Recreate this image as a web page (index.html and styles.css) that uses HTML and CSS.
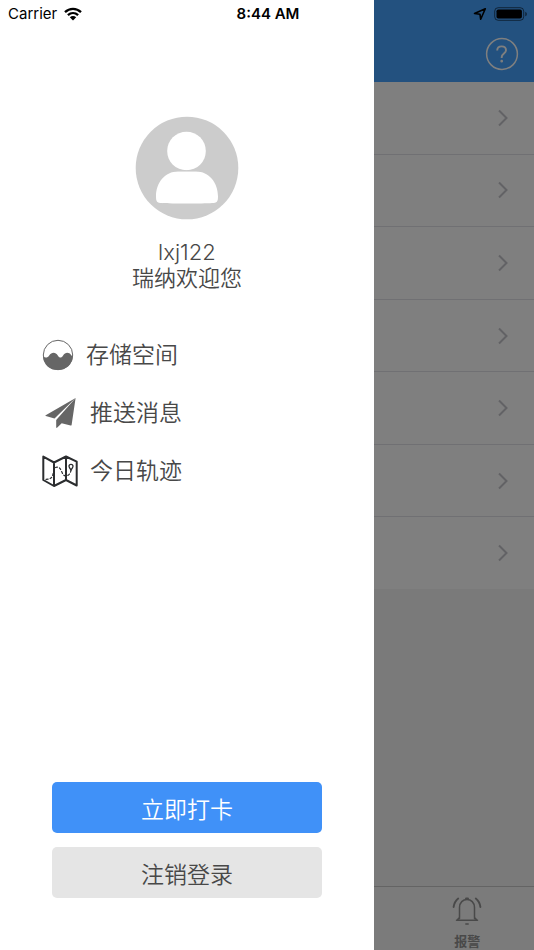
FILE: index.html
```html
<!DOCTYPE html>
<html lang="zh-CN">
<head>
<meta charset="utf-8">
<meta name="viewport" content="width=device-width, initial-scale=1">
<title>瑞纳</title>
<link rel="stylesheet" href="styles.css">
</head>
<body>
<div class="screen">
  <div class="app">
    <header class="navbar">
      <button class="help" aria-label="帮助">
        <svg viewBox="0 0 34 34" width="34" height="34" fill="none" stroke="#fff" stroke-width="1.5"><circle cx="17" cy="17" r="15.4"/><path d="M12.200 13.600c0-2.600 1.800-4.200 4.400-4.200s4.400 1.500 4.400 3.800c0 3.100-4.300 3.400-4.300 6.800v1" stroke-width="1.900"/><circle cx="16.700" cy="24.200" r=".6"/></svg>
      </button>
    </header>
    <ul class="rows">
      <li><svg class="chevron" viewBox="0 0 12 18"><path d="M2 1.5 9.5 9 2 16.5"/></svg></li>
      <li><svg class="chevron" viewBox="0 0 12 18"><path d="M2 1.5 9.5 9 2 16.5"/></svg></li>
      <li><svg class="chevron" viewBox="0 0 12 18"><path d="M2 1.5 9.5 9 2 16.5"/></svg></li>
      <li><svg class="chevron" viewBox="0 0 12 18"><path d="M2 1.5 9.5 9 2 16.5"/></svg></li>
      <li><svg class="chevron" viewBox="0 0 12 18"><path d="M2 1.5 9.5 9 2 16.5"/></svg></li>
      <li><svg class="chevron" viewBox="0 0 12 18"><path d="M2 1.5 9.5 9 2 16.5"/></svg></li>
      <li><svg class="chevron" viewBox="0 0 12 18"><path d="M2 1.5 9.5 9 2 16.5"/></svg></li>
    </ul>
    <nav class="tabbar">
      <a class="tab" href="#alarm">
        <svg viewBox="0 0 30 30" width="30" height="30" fill="none" stroke="#929292" stroke-width="1.5" stroke-linecap="round"><path d="M7.500 22.500V11.500C7.500 6.500 11 3.500 15 3.500s7.500 3 7.500 8v11M4.500 24.300h21M7.500 21.500l-2.600 2.800M22.500 21.500l2.600 2.800"/><path d="M14.200 2.600h1.600" stroke-width="2.400"/><path d="M13.800 28h2.400"/><path d="M6.200 2.600C3.600 4.600 2.200 7.500 1.600 11M23.800 2.600c2.600 2 4 4.900 4.600 8.400" stroke-width="1.900"/></svg>
        <span>报警</span>
      </a>
    </nav>
  </div>
  <div class="shade"></div>
  <aside class="drawer">
    <section class="profile">
      <svg viewBox="0 0 104 104" width="104" height="104"><circle cx="52" cy="52" r="51.300" fill="#ccc"/><circle cx="51.500" cy="35" r="19.300" fill="#fff"/><path d="M31 88" fill="#fff"/><path d="M43 55.500h18c13 0 22 11 22 25 0 5-1 6.500-6 6.500-9 .8-41 .8-50 0-5 0-6-1.500-6-6.500 0-14 9-25 22-25z" fill="#fff"/><path d="M40 54.700h23" stroke="#ccc" stroke-width=".8"/></svg>
      <p class="name">lxj122</p>
      <p>瑞纳欢迎您</p>
    </section>
    <nav class="menu">
      <a href="#storage">
        <svg viewBox="0 0 32 32" width="32" height="32"><circle cx="16" cy="16" r="14.700" fill="#fff" stroke="#666" stroke-width="1"/><path d="M1 17.400c2.400 1.600 4.600 1.400 6.200-1 2.200-3.400 6.300-3.800 8.600 0 1.700 2.700 3.600 2.700 5.300 0 2.200-3.400 5.900-3.400 8.100-.2.600.7 1.100 1 1.700 1C30.400 25.300 24.300 31 16 31S1.600 25.600 1 17.400z" fill="#666"/></svg>
        <span>存储空间</span>
      </a>
      <a href="#push">
        <svg viewBox="0 0 36 32" width="36" height="32" fill="#666"><path d="M33.600 1 3.700 18.200c-.4.300-.3.700.1.800L12.500 21.500z"/><path d="M33.600 1 14.200 23v7.200c0 .8.600.9 1.100.4l4.400-4.400 8.900 2.300c.5.100.9-.1 1-.6z"/></svg>
        <span>推送消息</span>
      </a>
      <a href="#track">
        <svg viewBox="0 0 36 32" width="36" height="32" fill="none" stroke="#2b2d2f" stroke-width="2" stroke-linejoin="round" stroke-linecap="round"><path d="M1.300 1.600 12 7.500l12-6 10.700 5.200v23.800L24 25l-12 6L1.300 25zM12 7.500V31M24 1.500V25"/><path d="M4 24.300c5 0 6.500-2 7.300-6.500.8-4.500 2.200-6.500 5-5.500 3.500 1 3.200 8 7 8.500 3.500.4 5.600-3 5.700-6" stroke-width="1.200" stroke-dasharray="2 2.200"/><path d="M29 15c-1.300-1.700-2-2.700-2-3.700a2 2 0 0 1 4 0c0 1-.7 2-2 3.700z" stroke-width="1.300"/></svg>
        <span>今日轨迹</span>
      </a>
    </nav>
    <div class="actions">
      <button class="primary">立即打卡</button>
      <button>注销登录</button>
    </div>
  </aside>
  <div class="status">
    <div class="carrier"><span>Carrier</span>
      <svg viewBox="0 0 18 14" width="18" height="14" fill="none" stroke="#000" stroke-width="2.300"><path d="M1 5.200c4.600-4.400 11.400-4.400 16 0M3.900 8.200c3-2.800 7.200-2.800 10.200 0"/><path d="M9 13.500 5.800 10.200c1.900-1.600 4.500-1.600 6.400 0z" fill="#000" stroke="none"/></svg>
    </div>
    <time>8:44 AM</time>
    <div class="power">
      <svg viewBox="0 0 14 14" width="14" height="14" fill="none" stroke="#000" stroke-width="1.600" stroke-linejoin="round"><path d="M12.300 1.700 1.500 6.500l5.500.8.700 5z"/></svg>
      <svg viewBox="0 0 34 14" width="34" height="14"><rect x=".7" y=".7" width="29" height="12.600" rx="3.500" fill="none" stroke="#000" stroke-opacity=".55"/><rect x="2.500" y="2.500" width="25.400" height="9" rx="1.800"/><path d="M31.300 4.700c2 .8 2 3.800 0 4.600z" fill-opacity=".6"/></svg>
    </div>
  </div>
</div>
</body>
</html>
```
FILE: styles.css
```css
* { box-sizing: border-box; }
body {
  margin: 0;
  font-family: Inter, "Noto Sans CJK SC", sans-serif;
  color: #484848;
}
svg { display: block; flex: none; }
a { color: inherit; text-decoration: none; }
p, ul { margin: 0; padding: 0; }
button { font: inherit; color: inherit; border: 0; padding: 0; }

.screen {
  display: grid;
  grid-template: minmax(100vh, auto) / 7fr 3fr;
}
.app, .shade, .status { grid-area: 1 / 1 / 2 / 3; }
.drawer { grid-area: 1 / 1; }

.app {
  display: flex;
  flex-direction: column;
  background: #f4f4f4;
}
.navbar {
  display: flex;
  justify-content: flex-end;
  padding: 37px 15px 11px;
  background: #46a2ff;
}
.help { background: none; }
.rows {
  display: flex;
  flex-direction: column;
  min-height: 507px;
  list-style: none;
  background: #fff;
}
.rows li {
  flex: 1;
  display: flex;
  align-items: center;
  justify-content: flex-end;
  padding-right: 25px;
  border-bottom: 1px solid #e0e0e6;
}
.rows li:last-child { border-bottom: 0; }
.chevron {
  width: 12px;
  height: 18px;
  fill: none;
  stroke: #c4c4ca;
  stroke-width: 2;
}
.tabbar {
  display: flex;
  justify-content: flex-end;
  margin-top: auto;
  border-top: 1px solid #c8c8c8;
  background: #f6f6f6;
}
.tab {
  width: 25%;
  height: 63px;
  padding-top: 9px;
  display: flex;
  flex-direction: column;
  align-items: center;
  gap: 6px;
  color: #929292;
  font-size: 13px;
  font-weight: 700;
  line-height: 18px;
}
.shade { background: rgba(0, 0, 0, .5); }

.drawer {
  display: flex;
  flex-direction: column;
  padding: 116px 0 52px;
  background: #fff;
}
.profile {
  display: flex;
  flex-direction: column;
  align-items: center;
  font-size: 22px;
  font-weight: 350;
  line-height: 26px;
}
.name { margin-top: 19px; }
.menu {
  display: flex;
  flex-direction: column;
  gap: 26px;
  padding: 48px 42px 0;
  font-size: 23px;
  font-weight: 350;
  line-height: 32px;
}
.menu a {
  display: flex;
  align-items: center;
  gap: 12px;
}
.actions {
  display: flex;
  flex-direction: column;
  gap: 14px;
  margin-top: auto;
  padding: 0 52px;
}
.actions button {
  height: 51px;
  border-radius: 5px;
  background: #e5e5e5;
  font-size: 23px;
  font-weight: 350;
}
.actions .primary {
  background: #4091f8;
  color: #fff;
}

.status {
  align-self: start;
  display: grid;
  grid-template-columns: 1fr auto 1fr;
  align-items: center;
  padding: 4px 6px 0 8px;
  color: #000;
  font-size: 15px;
  line-height: 20px;
}
.status time { font-weight: 600; }
.carrier, .power {
  display: flex;
  align-items: center;
  gap: 7px;
}
.power { justify-content: flex-end; }
```
